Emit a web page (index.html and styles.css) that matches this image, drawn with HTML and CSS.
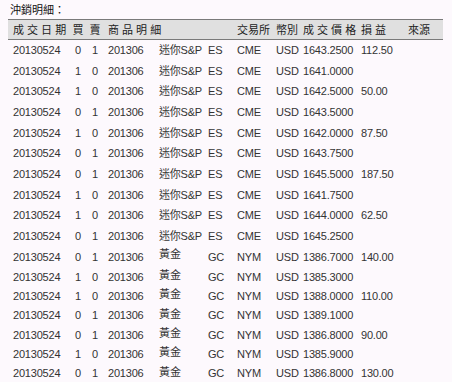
FILE: index.html
```html
<!DOCTYPE html>
<html lang="zh-Hant">
<head>
<meta charset="utf-8">
<title>沖銷明細</title>
<link rel="stylesheet" href="styles.css">
</head>
<body>
<div class="page">
  <div class="title">沖銷明細：</div>
  <table class="detail">
    <colgroup>
      <col class="c-date"><col class="c-buy"><col class="c-sell"><col class="c-month"><col class="c-name"><col class="c-code"><col class="c-exch"><col class="c-cur"><col class="c-price"><col class="c-pl"><col class="c-src">
    </colgroup>
    <thead>
      <tr>
        <th>成 交 日 期</th>
        <th class="ctr">買</th>
        <th class="ctr">賣</th>
        <th colspan="3">商 品 明 細</th>
        <th>交易所</th>
        <th>幣別</th>
        <th>成 交 價 格</th>
        <th>損 益</th>
        <th>來源</th>
      </tr>
    </thead>
    <tbody>
      <tr class="sp"><td>20130524</td><td class="ctr">0</td><td class="ctr">1</td><td>201306</td><td>迷你S&amp;P</td><td>ES</td><td>CME</td><td>USD</td><td>1643.2500</td><td>112.50</td><td></td></tr>
      <tr class="sp"><td>20130524</td><td class="ctr">1</td><td class="ctr">0</td><td>201306</td><td>迷你S&amp;P</td><td>ES</td><td>CME</td><td>USD</td><td>1641.0000</td><td></td><td></td></tr>
      <tr class="sp"><td>20130524</td><td class="ctr">1</td><td class="ctr">0</td><td>201306</td><td>迷你S&amp;P</td><td>ES</td><td>CME</td><td>USD</td><td>1642.5000</td><td>50.00</td><td></td></tr>
      <tr class="sp"><td>20130524</td><td class="ctr">0</td><td class="ctr">1</td><td>201306</td><td>迷你S&amp;P</td><td>ES</td><td>CME</td><td>USD</td><td>1643.5000</td><td></td><td></td></tr>
      <tr class="sp"><td>20130524</td><td class="ctr">1</td><td class="ctr">0</td><td>201306</td><td>迷你S&amp;P</td><td>ES</td><td>CME</td><td>USD</td><td>1642.0000</td><td>87.50</td><td></td></tr>
      <tr class="sp"><td>20130524</td><td class="ctr">0</td><td class="ctr">1</td><td>201306</td><td>迷你S&amp;P</td><td>ES</td><td>CME</td><td>USD</td><td>1643.7500</td><td></td><td></td></tr>
      <tr class="sp"><td>20130524</td><td class="ctr">0</td><td class="ctr">1</td><td>201306</td><td>迷你S&amp;P</td><td>ES</td><td>CME</td><td>USD</td><td>1645.5000</td><td>187.50</td><td></td></tr>
      <tr class="sp"><td>20130524</td><td class="ctr">1</td><td class="ctr">0</td><td>201306</td><td>迷你S&amp;P</td><td>ES</td><td>CME</td><td>USD</td><td>1641.7500</td><td></td><td></td></tr>
      <tr class="sp"><td>20130524</td><td class="ctr">1</td><td class="ctr">0</td><td>201306</td><td>迷你S&amp;P</td><td>ES</td><td>CME</td><td>USD</td><td>1644.0000</td><td>62.50</td><td></td></tr>
      <tr class="sp"><td>20130524</td><td class="ctr">0</td><td class="ctr">1</td><td>201306</td><td>迷你S&amp;P</td><td>ES</td><td>CME</td><td>USD</td><td>1645.2500</td><td></td><td></td></tr>
      <tr class="gold first"><td>20130524</td><td class="ctr">0</td><td class="ctr">1</td><td>201306</td><td class="cjk">黃金</td><td>GC</td><td>NYM</td><td>USD</td><td>1386.7000</td><td>140.00</td><td></td></tr>
      <tr class="gold"><td>20130524</td><td class="ctr">1</td><td class="ctr">0</td><td>201306</td><td class="cjk">黃金</td><td>GC</td><td>NYM</td><td>USD</td><td>1385.3000</td><td></td><td></td></tr>
      <tr class="gold"><td>20130524</td><td class="ctr">1</td><td class="ctr">0</td><td>201306</td><td class="cjk">黃金</td><td>GC</td><td>NYM</td><td>USD</td><td>1388.0000</td><td>110.00</td><td></td></tr>
      <tr class="gold"><td>20130524</td><td class="ctr">0</td><td class="ctr">1</td><td>201306</td><td class="cjk">黃金</td><td>GC</td><td>NYM</td><td>USD</td><td>1389.1000</td><td></td><td></td></tr>
      <tr class="gold"><td>20130524</td><td class="ctr">0</td><td class="ctr">1</td><td>201306</td><td class="cjk">黃金</td><td>GC</td><td>NYM</td><td>USD</td><td>1386.8000</td><td>90.00</td><td></td></tr>
      <tr class="gold"><td>20130524</td><td class="ctr">1</td><td class="ctr">0</td><td>201306</td><td class="cjk">黃金</td><td>GC</td><td>NYM</td><td>USD</td><td>1385.9000</td><td></td><td></td></tr>
      <tr class="gold"><td>20130524</td><td class="ctr">0</td><td class="ctr">1</td><td>201306</td><td class="cjk">黃金</td><td>GC</td><td>NYM</td><td>USD</td><td>1386.8000</td><td>130.00</td><td></td></tr>
    </tbody>
  </table>
</div>
</body>
</html>
```

FILE: styles.css
```css
html, body {
  margin: 0;
  padding: 0;
  background: #fdf9fd;
}

body {
  font-family: "Liberation Sans", "Noto Sans CJK TC", sans-serif;
  font-size: 11px;
  color: #333;
  overflow: hidden;
}

.page {
  padding: 0 9px 0 8px;
}

.title {
  box-sizing: border-box;
  height: 19px;
  padding: 3px 0 0 2px;
  line-height: 15px;
  color: #111;
}

.detail {
  border-collapse: collapse;
  table-layout: fixed;
  width: 435px;
}

.c-date { width: 61px; }
.c-buy { width: 18px; }
.c-sell { width: 16px; }
.c-month { width: 51px; }
.c-name { width: 49px; }
.c-code { width: 29px; }
.c-exch { width: 39px; }
.c-cur { width: 27px; }
.c-price { width: 58px; }
.c-pl { width: 47px; }
.c-src { width: 40px; }

.detail th {
  background: #e0e0e0;
  border-top: 1px solid #7a7a7a;
  border-bottom: 1px solid #7a7a7a;
  height: 19px;
  padding: 0 0 0 5px;
  font-weight: normal;
  text-align: left;
  white-space: nowrap;
  line-height: 14px;
  color: #222;
}

.detail td {
  padding: 0 0 0 5px;
  line-height: 14px;
  white-space: nowrap;
  overflow: visible;
  letter-spacing: -0.2px;
}

.detail th.ctr,
.detail td.ctr {
  padding: 0;
  text-align: center;
}

.detail td.cjk {
  letter-spacing: 0;
  vertical-align: top;
  padding-top: 1px;
}

.detail tr.sp {
  height: 20.7px;
}

.detail tr.gold {
  height: 19.3px;
}

.detail tr.first {
  height: 20.7px;
}
```
